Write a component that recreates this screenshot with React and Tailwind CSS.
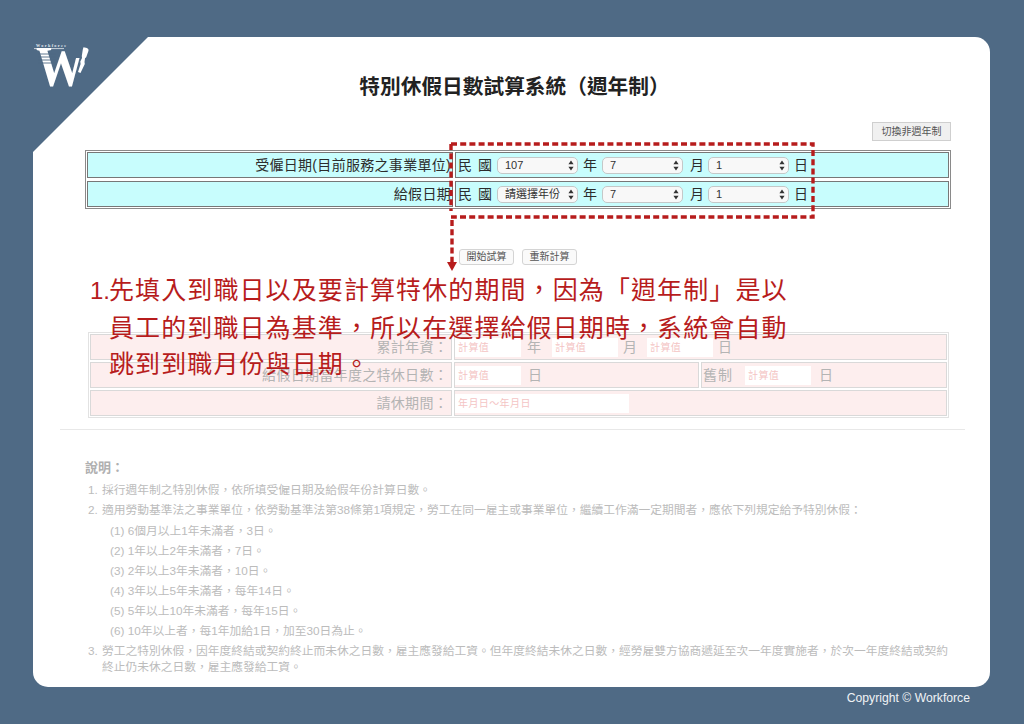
const FONT = "font-['Liberation_Sans','Noto_Sans_CJK_TC',sans-serif]";

function Logo() {
  return (
    <svg className="absolute left-[30px] top-[40px]" width="65" height="50" viewBox="30 40 65 50" aria-label="Workforce">
      <defs>
        <clipPath id="wclip">
          <path d="M30 40 H72 L73 58 H95 V95 H30 Z" />
        </clipPath>
      </defs>
      <text x="36" y="46.8" fontSize="4.2" fontWeight="700" fill="#e8edf2" fontFamily="Liberation Serif, serif" textLength="30">Workforce</text>
      <line x1="34" y1="48.6" x2="64" y2="48.6" stroke="#fff" strokeWidth="0.7" />
      <g clipPath="url(#wclip)">
        <text x="36" y="86" fontSize="56" fontWeight="700" fill="#fff" fontFamily="Liberation Serif, serif" textLength="49" lengthAdjust="spacingAndGlyphs">W</text>
      </g>
      <g stroke="#4f6a85" strokeWidth="0.9">
        <line x1="38" y1="54" x2="56" y2="54" />
        <line x1="38" y1="57" x2="56" y2="57" />
        <line x1="38" y1="60" x2="56" y2="60" />
        <line x1="38" y1="63" x2="56" y2="63" />
      </g>
      <path d="M83.5 47.2 L87 48 Q89 49 88.5 50.8 L86.2 57.2 L85 58.2 L84.5 62 L84.8 64 L80.5 73 L78 72 L80.6 64 L80.3 61.6 L82 58 L81.8 56 L82.8 49.5 Z" fill="#fff" />
    </svg>
  );
}

function Sel({ value }) {
  return (
    <span className="relative inline-block h-[17px] w-[81px] shrink-0">
      <select
        defaultValue={value}
        className={`${FONT} block h-full w-full appearance-none rounded-[5px] border border-[#c4c8c8] bg-[#f8f8f8] pl-[7px] text-[11px] leading-[15px] text-[#333]`}
      >
        <option value={value}>{value}</option>
      </select>
      <svg className="absolute right-[4px] top-[3px]" width="6" height="11" viewBox="0 0 6 11">
        <path d="M3 0.5 L5.6 4.2 H0.4 Z M3 10.5 L5.6 6.8 H0.4 Z" fill="#333" />
      </svg>
    </span>
  );
}

function DateRow({ label, year }) {
  return (
    <div className="flex h-[26px] gap-[2px]">
      <div className="flex w-[366px] items-center justify-end border border-[#777] bg-[#c8fdfd] pr-[1px] text-[14px] tracking-[0.3px] text-[#2c2c2c]">
        {label}
      </div>
      <div className="flex flex-1 items-center border border-[#777] bg-[#c8fdfd] pl-[2px] text-[14px] text-[#2c2c2c]">
        <span className="flex w-[39px] shrink-0 gap-[6px] whitespace-nowrap">民<span>國</span></span>
        <Sel value={year} />
        <span className="ml-[5px] w-[19px] shrink-0">年</span>
        <Sel value="7" />
        <span className="ml-[7px] w-[18px] shrink-0">月</span>
        <Sel value="1" />
        <span className="ml-[5px]">日</span>
      </div>
    </div>
  );
}

function Calc({ w = "w-[66px]", text = "計算值" }) {
  return (
    <span className={`${w} flex h-[19px] shrink-0 items-center bg-white pl-[3px] text-[10px] tracking-[0.4px] text-[#f4c4c4]`}>
      {text}
    </span>
  );
}

function ResCell({ className, children }) {
  return (
    <div className={`flex items-center border border-[#d9d9d9] bg-[#fdeeee] text-[14px] text-[#b4b4b4] ${className || ""}`}>
      {children}
    </div>
  );
}

function ResLabel({ children }) {
  return (
    <ResCell className="w-[362px] justify-end pr-[3px] tracking-[0.3px]">{children}</ResCell>
  );
}

const Btn = ({ children }) => (
  <button className="h-[16px] w-[55px] rounded-[3px] border border-[#d4d4d4] bg-[#fafafa] text-[10px] leading-none text-[#555]">
    {children}
  </button>
);

const subs = [
  "(1) 6個月以上1年未滿者，3日。",
  "(2) 1年以上2年未滿者，7日。",
  "(3) 2年以上3年未滿者，10日。",
  "(4) 3年以上5年未滿者，每年14日。",
  "(5) 5年以上10年未滿者，每年15日。",
  "(6) 10年以上者，每1年加給1日，加至30日為止。",
];

export default function App() {
  return (
    <div className={`${FONT} relative h-[724px] w-[1024px] overflow-hidden bg-[#4f6a85] pl-[33px] pt-[37px]`}>
      <div className="relative h-[650px] w-[957px] overflow-hidden rounded-[15px] bg-white [clip-path:polygon(115px_0,100%_0,100%_100%,0_100%,0_115px)]">
        <h1 className="mt-[37px] h-[26px] whitespace-nowrap pl-[6px] text-center text-[20.7px] font-bold leading-[26px] text-[#222]">
          特別休假日數試算系統（週年制）
        </h1>

        <div className="mr-[39px] mt-[22px] flex justify-end">
          <button className="h-[19px] w-[79px] border border-[#cfcfcf] bg-[#f0f0f0] text-[10px] leading-none text-[#555]">
            切換非週年制
          </button>
        </div>

        <div className="ml-[52px] mt-[9px] flex w-[866px] flex-col gap-[3px] border border-[#8a8a8a] p-[1px]">
          <DateRow label="受僱日期(目前服務之事業單位)" year="107" />
          <DateRow label="給假日期" year="請選擇年份" />
        </div>

        <div className="ml-[426px] mt-[40px] flex gap-[8px]">
          <Btn>開始試算</Btn>
          <Btn>重新計算</Btn>
        </div>

        <div className="ml-[55px] mt-[67px] flex h-[86px] w-[861px] flex-col gap-[2px] border border-[#e2e2e2] p-[1px]">
          <div className="flex h-[26px] gap-[2px]">
            <ResLabel>累計年資：</ResLabel>
            <ResCell className="flex-1">
              <Calc />
              <span className="ml-[6px] w-[25px] shrink-0">年</span>
              <Calc />
              <span className="ml-[5px] w-[24px] shrink-0">月</span>
              <Calc />
              <span className="ml-[5px]">日</span>
            </ResCell>
          </div>
          <div className="flex h-[26px] gap-[2px]">
            <ResLabel>給假日期當年度之特休日數：</ResLabel>
            <ResCell className="w-[245px]">
              <Calc />
              <span className="ml-[7px]">日</span>
            </ResCell>
            <ResCell className="flex-1 pl-[1px]">
              <span className="w-[42px] shrink-0 tracking-[1px]">舊制</span>
              <Calc />
              <span className="ml-[8px]">日</span>
            </ResCell>
          </div>
          <div className="flex h-[26px] gap-[2px]">
            <ResLabel>請休期間：</ResLabel>
            <ResCell className="flex-1">
              <Calc w="w-[174px]" text="年月日～年月日" />
            </ResCell>
          </div>
        </div>

        <hr className="ml-[27px] mt-[11px] w-[905px] border-t border-[#e8e8e8]" />

        <div className="ml-[52px] mt-[29px] text-[11.75px] text-[#bcbcbc]">
          <div className="h-[18px] text-[13px] font-bold leading-[18px] text-[#b0b0b0]">說明：</div>
          <ol className="mt-[3px] flex flex-col leading-[20px]">
            <li className="flex h-[20px] whitespace-nowrap"><span className="ml-[3px] w-[14px]">1.</span>採行週年制之特別休假，依所填受僱日期及給假年份計算日數。</li>
            <li className="flex h-[20px] whitespace-nowrap"><span className="ml-[3px] w-[14px]">2.</span>適用勞動基準法之事業單位，依勞動基準法第38條第1項規定，勞工在同一雇主或事業單位，繼續工作滿一定期間者，應依下列規定給予特別休假：</li>
            {subs.map((s, i) => (
              <li key={s} className={`ml-[25px] h-[20px] whitespace-nowrap ${i === 0 ? "mt-[1px]" : ""}`}>{s}</li>
            ))}
            <li className="mt-[2px] flex whitespace-nowrap leading-[16px]">
              <span className="ml-[3px] w-[14px] shrink-0">3.</span>
              <span>勞工之特別休假，因年度終結或契約終止而未休之日數，雇主應發給工資。但年度終結未休之日數，經勞雇雙方協商遞延至次一年度實施者，於次一年度終結或契約<br />終止仍未休之日數，雇主應發給工資。</span>
            </li>
          </ol>
        </div>

        <svg className="absolute left-[410px] top-[100px]" width="380" height="140" viewBox="443 137 380 140">
          <g fill="none" stroke="#b71c1c" strokeWidth="3.4" strokeDasharray="6 3.2">
            <path d="M451 144 H813 V217 H451" />
            <path d="M451 144 V211" />
            <path d="M452 220 V262" />
          </g>
          <path d="M447 262 H457 L452 271 Z" fill="#b71c1c" />
        </svg>

        <div className="absolute left-[57px] top-[235px] whitespace-nowrap text-[25px] leading-[36.5px] tracking-[1.1px] text-[#b71c1c]">
          <p><span className="inline-block w-[19px] text-[24px] tracking-normal">1.</span>先填入到職日以及要計算特休的期間，因為「週年制」是以</p>
          <p className="pl-[19px]">員工的到職日為基準，所以在選擇給假日期時，系統會自動</p>
          <p className="pl-[19px]">跳到到職月份與日期。</p>
        </div>
      </div>

      <div className="mt-[4px] flex h-[14px] justify-end pr-[54px] text-[12.2px] leading-[14px] text-[#f0f3f6]">
        Copyright © Workforce
      </div>

      <Logo />
    </div>
  );
}
